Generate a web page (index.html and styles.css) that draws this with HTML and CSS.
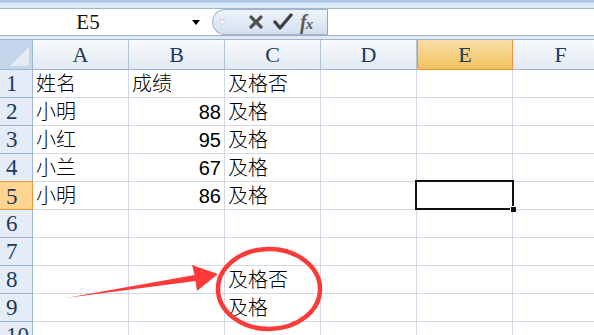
FILE: index.html
```html
<!DOCTYPE html>
<html lang="zh">
<head>
  <meta charset="UTF-8">
  <title>Sheet1</title>
  <link rel="stylesheet" href="styles.css">
</head>
<body>
  <div class="sheet">
    <div class="topband"></div>
    <div class="formula">
      <div class="namebox"><span class="ref">E5</span><span class="drop"></span></div>
      <div class="fxbox">
        <span class="dot"></span>
        <svg class="ico" width="16" height="16" viewBox="0 0 16 16"><path d="M3 3 L13 13 M13 3 L3 13" stroke="#505050" stroke-width="3.2" stroke-linecap="round"/></svg>
        <svg class="ico" width="20" height="18" viewBox="0 0 20 18"><path d="M2 9 L7 15 L18 2" stroke="#404040" stroke-width="3.4" fill="none" stroke-linejoin="round" stroke-linecap="round"/></svg>
        <span class="fx">f<i>x</i></span>
      </div>
      <div class="input"></div>
    </div>
    <div class="strip"></div>

    <div class="grid">
      <div class="corner"><span class="tri"></span></div>
      <div class="ch">A</div><div class="ch">B</div><div class="ch">C</div><div class="ch">D</div><div class="ch on">E</div><div class="ch">F</div>

      <div class="rh">1</div><div class="c">姓名</div><div class="c">成绩</div><div class="c">及格否</div><div class="c"></div><div class="c"></div><div class="c"></div>
      <div class="rh">2</div><div class="c">小明</div><div class="c num">88</div><div class="c">及格</div><div class="c"></div><div class="c"></div><div class="c"></div>
      <div class="rh">3</div><div class="c">小红</div><div class="c num">95</div><div class="c">及格</div><div class="c"></div><div class="c"></div><div class="c"></div>
      <div class="rh">4</div><div class="c">小兰</div><div class="c num">67</div><div class="c">及格</div><div class="c"></div><div class="c"></div><div class="c"></div>
      <div class="rh on">5</div><div class="c">小明</div><div class="c num">86</div><div class="c">及格</div><div class="c"></div><div class="c active"><span class="sel"><span class="handle"></span></span></div><div class="c"></div>
      <div class="rh">6</div><div class="c"></div><div class="c"></div><div class="c"></div><div class="c"></div><div class="c"></div><div class="c"></div>
      <div class="rh">7</div><div class="c"></div><div class="c"></div><div class="c"></div><div class="c"></div><div class="c"></div><div class="c"></div>
      <div class="rh">8</div><div class="c"></div><div class="c"></div><div class="c">及格否</div><div class="c"></div><div class="c"></div><div class="c"></div>
      <div class="rh">9</div><div class="c"></div><div class="c"></div><div class="c">及格</div><div class="c"></div><div class="c"></div><div class="c"></div>
      <div class="rh">10</div><div class="c"></div><div class="c"></div><div class="c"></div><div class="c"></div><div class="c"></div><div class="c"></div>
    </div>

    <svg class="mark" width="594" height="335" viewBox="0 0 594 335">
      <ellipse cx="269" cy="289" rx="51" ry="40" fill="none" stroke="#fd3a3a" stroke-width="4.5"/>
      <polygon points="66,298 194.5,275 192,265 218,274 197,291 195.5,281" fill="#fd3a3a"/>
    </svg>
  </div>
</body>
</html>
```

FILE: styles.css
```css
body { margin: 0; background: #fff; }
.sheet { position: relative; width: 594px; height: 335px; overflow: hidden; }

.topband { height: 8px; background: linear-gradient(#aec6e4 0, #aec6e4 2px, #d6e3f3 3px, #dde8f5 7px); border-bottom: 1px solid #9fb6d3; }

.formula { display: flex; height: 26px; border-bottom: 1px solid #a4aebb; background: #fff; }
.namebox { width: 212px; display: flex; align-items: center; }
.ref { width: 176px; text-align: center; font-family: "Liberation Serif", "DejaVu Serif", serif; font-size: 21px; color: #111; }
.drop { margin-left: 16px; border-left: 4px solid transparent; border-right: 4px solid transparent; border-top: 5px solid #000; }

.fxbox { width: 116px; display: flex; align-items: center; gap: 9px; padding-left: 6px; box-sizing: border-box; border: 1px solid #9fb5d2; border-right-color: #8ea6c6; border-radius: 13px 0 0 13px; background: linear-gradient(#eef3fa, #d3e0f1); }
.dot { width: 6px; height: 6px; border-radius: 50%; background: radial-gradient(#fff, #c2c8d0); margin-right: 14px; }
.ico { display: block; }
.fx { font-family: "Liberation Serif", "DejaVu Serif", serif; font-style: italic; font-weight: bold; font-size: 20px; color: #5a5a5a; letter-spacing: -1px; margin-left: -2px; }
.fx i { font-size: 15px; }
.input { flex: 1; }

.strip { height: 3px; background: #e2e9f3; }

.grid { display: grid; grid-template-columns: 33px repeat(6, 96px); grid-template-rows: 30px repeat(10, 28px); border-top: 1px solid #9eb6ce; }
.grid > div { box-sizing: border-box; }

.corner { background: #c4d6ec; border-right: 1px solid #9eb6ce; border-bottom: 1px solid #9eb6ce; position: relative; }
.tri { position: absolute; right: 3px; bottom: 3px; width: 19px; height: 19px; background: linear-gradient(135deg, #f4f7fb, #dfe5ee); clip-path: polygon(100% 0, 100% 100%, 0 100%); }

.ch { background: linear-gradient(#f8fafd, #e3eaf4); border-right: 1px solid #b1c4da; border-bottom: 1px solid #9eb6ce; text-align: center; font-family: "Liberation Serif", "DejaVu Serif", serif; font-size: 22px; line-height: 29px; color: #1e395b; }
.ch.on { background: linear-gradient(#f9dda6, #f1c35f); border: 1px solid #f29436; border-top: none; }

.rh { background: #e4ecf7; border-right: 1px solid #9eb6ce; border-bottom: 1px solid #9eb6ce; padding-left: 6px; font-family: "Liberation Serif", "DejaVu Serif", serif; font-size: 23px; line-height: 28px; color: #1e395b; }
.rh.on { background: #fdd591; border: 1px solid #f29436; border-left: none; margin-top: -1px; height: 29px; line-height: 29px; }

.c { border-right: 1px solid #d0d7e5; border-bottom: 1px solid #d0d7e5; padding: 1px 3px 0; font-family: "Liberation Sans", "Noto Sans CJK SC", sans-serif; font-size: 20px; font-weight: 300; line-height: 26px; color: #000; white-space: nowrap; }
.c.num { text-align: right; font-weight: 400; }
.c.active { position: relative; }
.sel { position: absolute; left: -2px; top: -2px; width: 99px; height: 30px; box-sizing: border-box; border: 2px solid #111; }
.handle { position: absolute; right: -4px; bottom: -4px; width: 5px; height: 5px; background: #111; border-left: 1px solid #fff; border-top: 1px solid #fff; }

.mark { position: absolute; left: 0; top: 0; pointer-events: none; }
```
